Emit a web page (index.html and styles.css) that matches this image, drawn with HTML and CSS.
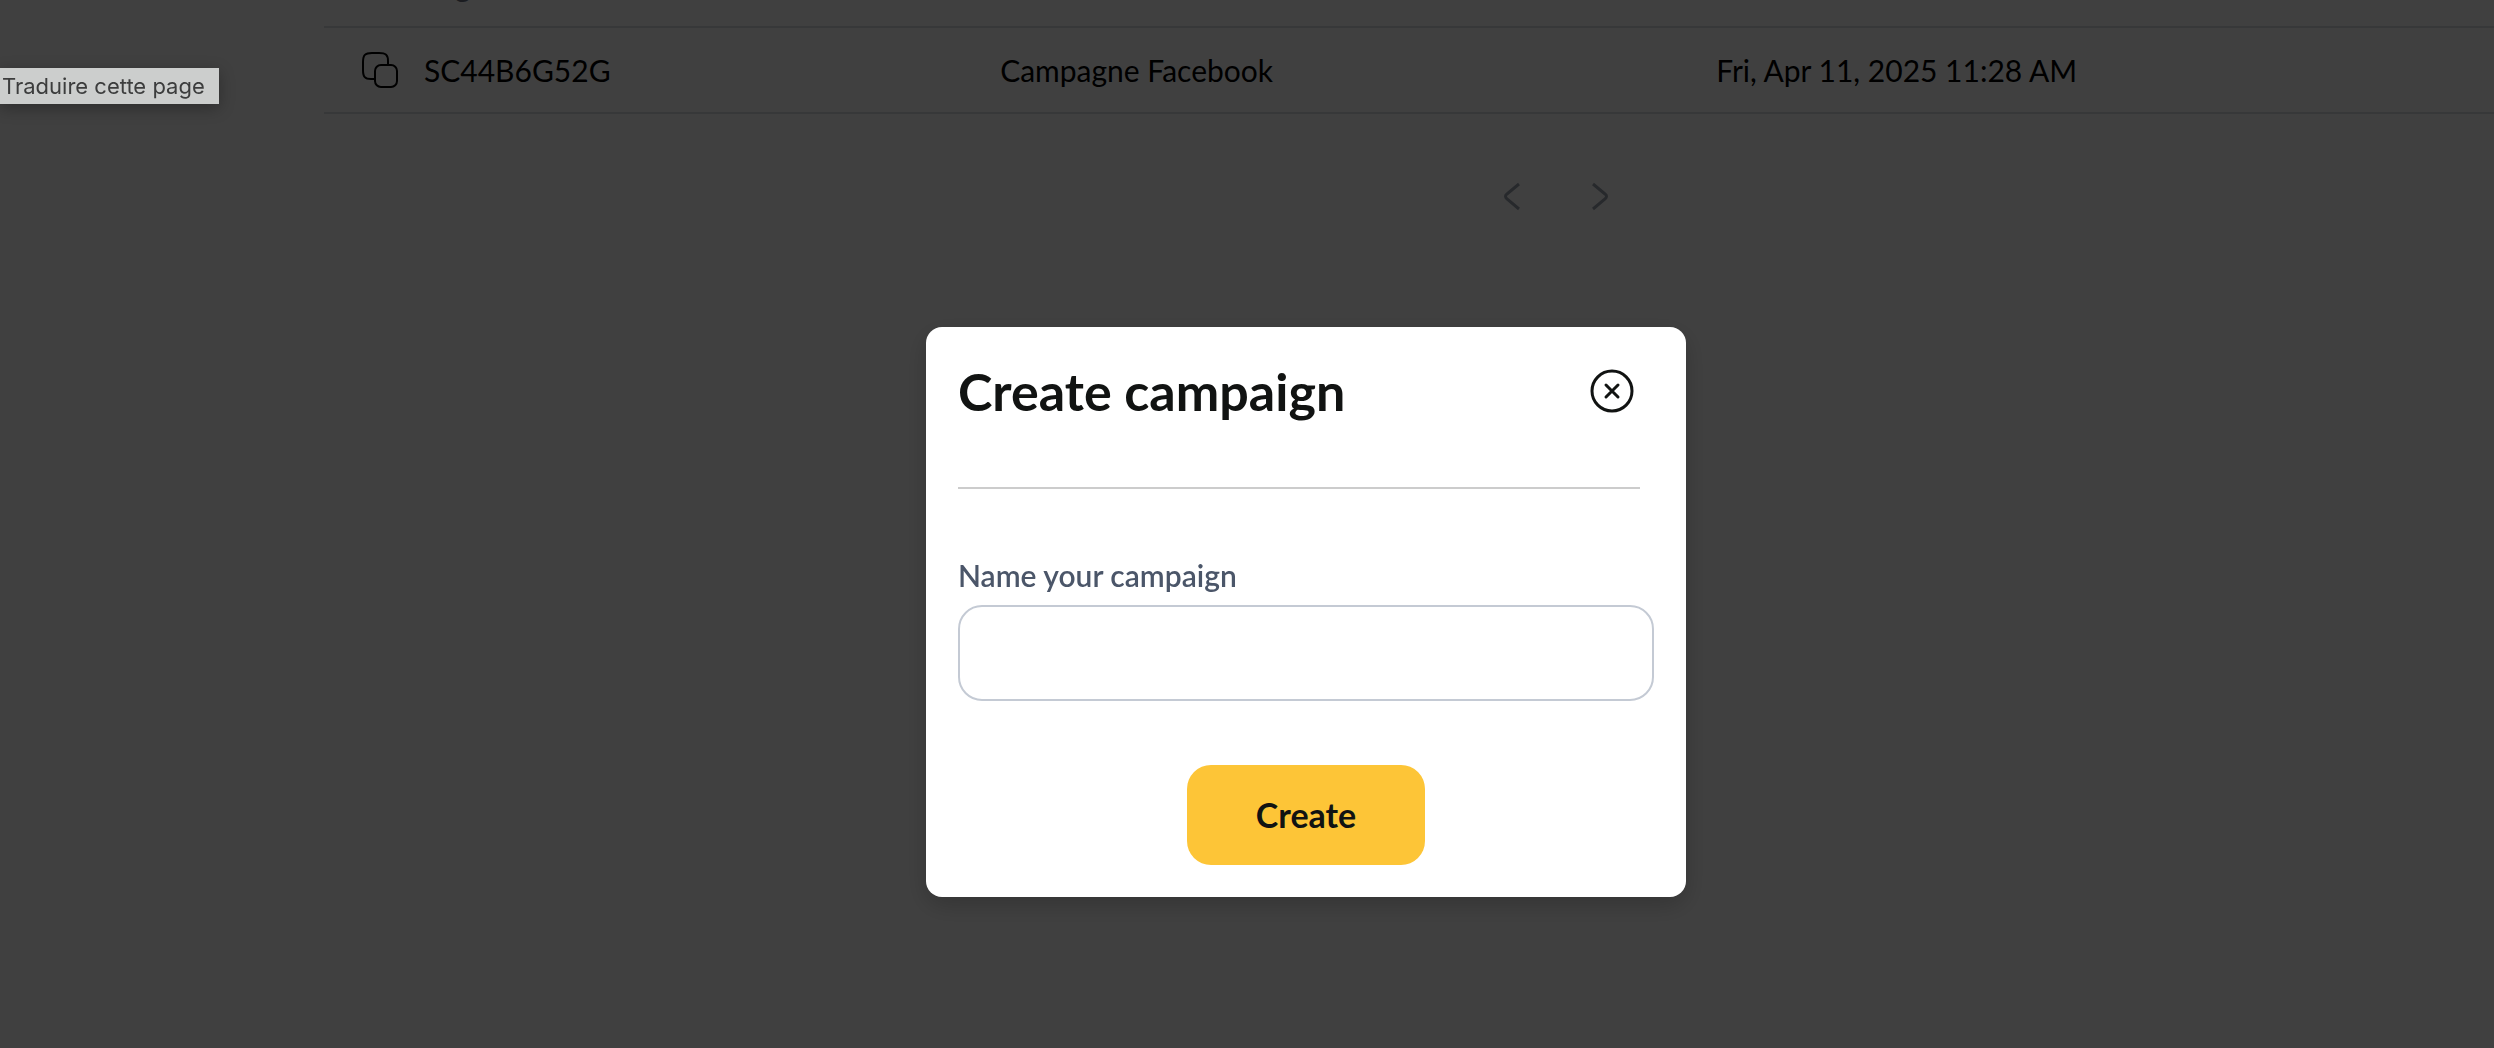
FILE: index.html
```html
<!DOCTYPE html>
<html lang="en">
<head>
<meta charset="utf-8">
<title>Campaigns</title>
<link rel="stylesheet" href="styles.css">
</head>
<body>
<main class="page">
  <table class="campaigns">
    <colgroup>
      <col class="col-code">
      <col class="col-name">
      <col class="col-date">
    </colgroup>
    <thead>
      <tr><th scope="col">Tracking code</th><th scope="col">Name</th><th scope="col">Date added</th></tr>
    </thead>
    <tbody>
      <tr>
        <td>
          <div class="code">
            <button class="icon-button" type="button" aria-label="Copy code">
              <svg width="40" height="40" viewBox="0 0 40 40" fill="none" stroke="currentColor" stroke-width="2">
                <path d="M14 29H11C5 29 3 27 3 20V12C3 5 5 3 12 3H19C26 3 28 5 28 11V15"/>
                <rect x="15" y="15" width="22" height="22" rx="6"/>
              </svg>
            </button>
            <span>SC44B6G52G</span>
          </div>
        </td>
        <td>Campagne Facebook</td>
        <td>Fri, Apr 11, 2025 11:28 AM</td>
      </tr>
    </tbody>
  </table>
  <nav class="pager" aria-label="Pagination">
    <button class="icon-button" type="button" aria-label="Previous page">
      <svg width="40" height="40" viewBox="0 0 40 40" fill="none" stroke="currentColor" stroke-width="3"><path d="M27 8L15 18Q12 20 15 23L27 33"/></svg>
    </button>
    <button class="icon-button" type="button" aria-label="Next page">
      <svg width="40" height="40" viewBox="0 0 40 40" fill="none" stroke="currentColor" stroke-width="3"><path d="M13 8L25 18Q28 20 25 23L13 33"/></svg>
    </button>
  </nav>
</main>
<div class="overlay">
  <section class="modal" role="dialog" aria-modal="true" aria-labelledby="modal-title">
    <header class="modal-head">
      <h2 id="modal-title">Create campaign</h2>
      <button class="icon-button" type="button" aria-label="Close">
        <svg width="48" height="48" viewBox="0 0 48 48" fill="none" stroke="currentColor" stroke-width="3" stroke-linecap="round"><circle cx="24" cy="24" r="20"/><path d="M18 18L30 30M30 18L18 30"/></svg>
      </button>
    </header>
    <form class="modal-form">
      <label for="campaign-name">Name your campaign</label>
      <input id="campaign-name" type="text">
      <button class="create" type="button">Create</button>
    </form>
  </section>
</div>
<div class="tooltip" role="tooltip">Traduire cette page</div>
</body>
</html>
```
FILE: styles.css
```css
* {
  box-sizing: border-box;
}

body {
  margin: 0;
  overflow: hidden;
  background: #fff;
  color: #000;
  font-family: Lato, "Liberation Sans", sans-serif;
  font-size: 30px;
  line-height: 36px;
}

.page {
  height: 100vh;
  padding-left: 324px;
  overflow: hidden;
}

.campaigns {
  width: 100%;
  margin-top: -56px;
  border-collapse: separate;
  border-spacing: 0;
  table-layout: fixed;
}

.col-code {
  width: 29.5%;
}

.col-name {
  width: 33%;
}

.campaigns th,
.campaigns td {
  height: 86px;
  padding: 0 36px;
  border-bottom: 2px solid #dcdee2;
  text-align: left;
  white-space: nowrap;
}

.campaigns th {
  height: 84px;
  color: #6b7280;
  font-weight: 600;
}

.code {
  display: flex;
  align-items: center;
  gap: 24px;
}

.icon-button {
  display: inline-flex;
  padding: 0;
  border: 0;
  background: none;
  color: inherit;
}

.pager {
  display: flex;
  justify-content: center;
  gap: 48px;
  padding: 62px 0 0 294px;
  color: #9ca3af;
}

.overlay {
  position: fixed;
  inset: 0;
  display: flex;
  align-items: flex-start;
  justify-content: center;
  padding: 327px 0 0 118px;
  background: rgba(0, 0, 0, 0.75);
}

.modal {
  width: 760px;
  padding: 32px;
  border-radius: 16px;
  background: #fff;
  box-shadow: 0 8px 24px rgba(0, 0, 0, 0.2);
  color: #111312;
}

.modal-head {
  display: flex;
  align-items: flex-start;
  justify-content: space-between;
  height: 130px;
  margin-right: 14px;
  padding: 8px 4px 0 0;
  border-bottom: 2px solid #ccc;
}

.modal-head h2 {
  margin: 0;
  font-size: 52px;
  font-weight: 700;
  line-height: 48px;
}

.modal-form {
  display: flex;
  flex-direction: column;
}

.modal-form label {
  margin-top: 68px;
  color: #4b5669;
  font-weight: 600;
}

.modal-form input {
  height: 96px;
  margin: 12px 0 64px;
  padding: 0 24px;
  border: 2px solid #c4cad4;
  border-radius: 24px;
  background: #fff;
  font: inherit;
}

.create {
  align-self: center;
  width: 238px;
  height: 100px;
  padding: 0;
  border: 0;
  border-radius: 24px;
  background: #fdc537;
  color: #111312;
  font: inherit;
  font-size: 34px;
  font-weight: 700;
}

.tooltip {
  position: absolute;
  top: 68px;
  left: 0;
  padding: 0 14px 0 2px;
  background: #cccecd;
  box-shadow: 0 4px 16px rgba(0, 0, 0, 0.3);
  color: #3c3d3d;
  font-family: Inter, "Liberation Sans", sans-serif;
  font-size: 22px;
}
```
